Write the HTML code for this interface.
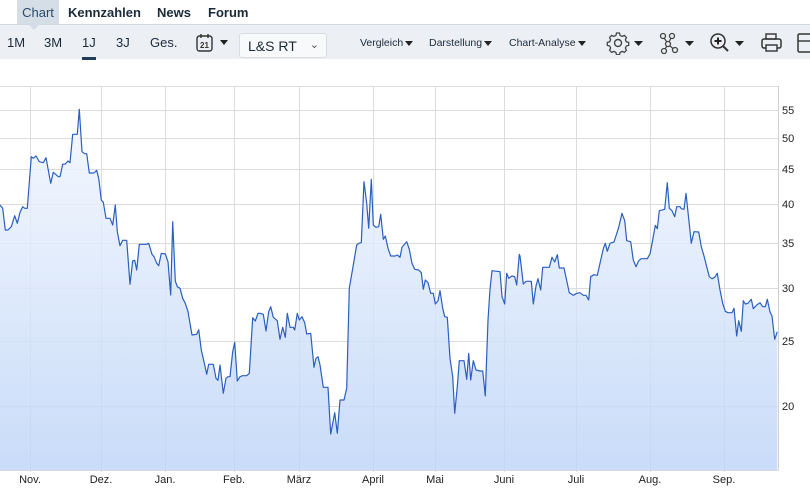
<!DOCTYPE html>
<html><head><meta charset="utf-8"><style>
*{margin:0;padding:0;box-sizing:border-box}
body{width:810px;height:494px;overflow:hidden;background:#fff;font-family:"Liberation Sans",sans-serif;color:#1b2a3a;position:relative}
.tabs{position:absolute;top:0;left:0;width:810px;height:24px}
.tab{position:absolute;top:0;height:24px;line-height:25px;font-size:13px;font-weight:bold}
.tb{position:absolute;top:24px;left:0;width:810px;height:35px;background:#eceff3;border-top:1px solid #cfd8df}
.t{position:absolute;top:10px;font-size:13px}
.s{position:absolute;top:12px;font-size:10.5px}
.tri{display:inline-block;width:0;height:0;border-left:4.5px solid transparent;border-right:4.5px solid transparent;border-top:5px solid #222;vertical-align:middle;margin-left:2px}
</style></head><body>
<div class="tabs">
<div class="tab" style="left:17px;width:42px;background:#d5dee6;text-align:center;color:#2b4a66;font-weight:normal">Chart</div>
<div class="tab" style="left:68px">Kennzahlen</div>
<div class="tab" style="left:157px">News</div>
<div class="tab" style="left:208px">Forum</div>
</div>
<div class="tb">
<div style="position:absolute;left:28px;top:-1px;width:0;height:0;border-left:6px solid transparent;border-right:6px solid transparent;border-top:6px solid #d5dee6"></div>
<div class="t" style="left:7px">1M</div>
<div class="t" style="left:44px">3M</div>
<div class="t" style="left:82px">1J</div>
<div style="position:absolute;left:82px;top:32px;width:14px;height:3px;background:#1d3c5a"></div>
<div class="t" style="left:116px">3J</div>
<div class="t" style="left:150px">Ges.</div>
<svg style="position:absolute;left:195px;top:8px" width="20" height="20" viewBox="0 0 20 20"><rect x="2" y="3" width="15" height="15" rx="2.5" fill="none" stroke="#333" stroke-width="1.4"/><line x1="6" y1="1" x2="6" y2="5" stroke="#333" stroke-width="1.4"/><line x1="13" y1="1" x2="13" y2="5" stroke="#333" stroke-width="1.4"/><text x="9.5" y="15" font-size="8" font-weight="bold" text-anchor="middle" font-family="Liberation Sans" fill="#333">21</text></svg>
<span class="tri" style="position:absolute;left:218px;top:15px"></span>
<div style="position:absolute;left:239px;top:8px;width:88px;height:25px;background:#f8f9fa;border:1px solid #d8dde2;border-radius:3px;font-size:14px;padding-left:8px;line-height:25px">L&amp;S RT<span style="position:absolute;right:7px;top:-1px;font-size:11px;color:#555">&#8964;</span></div>
<div class="s" style="left:360px">Vergleich<span class="tri"></span></div>
<div class="s" style="left:429px">Darstellung<span class="tri"></span></div>
<div class="s" style="left:509px">Chart-Analyse<span class="tri"></span></div>
<svg style="position:absolute;left:606px;top:6px" width="40" height="24" viewBox="0 0 40 24"><circle cx="12" cy="12" r="3.5" fill="none" stroke="#444" stroke-width="1.4"/><path d="M10.5 3.5h3l.6 2.4 2 1 2.3-1 2 2.1-1 2.3.9 2 2.4.6v3l-2.4.6-.9 2 1 2.3-2 2.1-2.3-1-2 1-.6 2.4h-3l-.6-2.4-2-1-2.3 1-2-2.1 1-2.3-.9-2-2.4-.6v-3l2.4-.6.9-2-1-2.3 2-2.1 2.3 1 2-1z" fill="none" stroke="#444" stroke-width="1.3" transform="translate(0,-1.5)"/><path d="M28 10h9l-4.5 5z" fill="#222"/></svg>
<svg style="position:absolute;left:658px;top:6px" width="40" height="24" viewBox="0 0 40 24"><circle cx="5" cy="5" r="2.5" fill="none" stroke="#444" stroke-width="1.3"/><circle cx="14" cy="5" r="2.5" fill="none" stroke="#444" stroke-width="1.3"/><circle cx="10" cy="13" r="2.5" fill="none" stroke="#444" stroke-width="1.3"/><circle cx="17" cy="19" r="2.5" fill="none" stroke="#444" stroke-width="1.3"/><circle cx="6" cy="20" r="2.5" fill="none" stroke="#444" stroke-width="1.3"/><path d="M6 7l3 4M13 7l-2 4M12 15l3 2.5M9 15l-2 3" stroke="#444" stroke-width="1.2"/><path d="M27 10h9l-4.5 5z" fill="#222"/></svg>
<svg style="position:absolute;left:708px;top:6px" width="40" height="24" viewBox="0 0 40 24"><circle cx="10" cy="10" r="7" fill="none" stroke="#333" stroke-width="1.5"/><path d="M15 15l5 5" stroke="#333" stroke-width="2"/><path d="M10 6.5v7M6.5 10h7" stroke="#222" stroke-width="2"/><path d="M27 10h9l-4.5 5z" fill="#222"/></svg>
<svg style="position:absolute;left:760px;top:7px" width="24" height="22" viewBox="0 0 24 22"><rect x="6" y="2" width="10" height="5" fill="none" stroke="#333" stroke-width="1.4"/><rect x="2" y="7" width="19" height="9" rx="2" fill="none" stroke="#333" stroke-width="1.5"/><rect x="6" y="13" width="11" height="6" fill="#eceff3" stroke="#333" stroke-width="1.4"/></svg>
<svg style="position:absolute;left:796px;top:7px" width="14" height="22" viewBox="0 0 14 22"><rect x="2" y="2" width="16" height="18" rx="1.5" fill="none" stroke="#333" stroke-width="1.5"/><path d="M2 9h16" stroke="#333" stroke-width="1.4"/></svg>
</div>
<svg style="position:absolute;left:0;top:0" width="810" height="494">
<defs><linearGradient id="g" x1="0" y1="0" x2="0" y2="1"><stop offset="0" stop-color="#f3f7fe"/><stop offset="1" stop-color="#bdd4f7"/></linearGradient></defs>
<g stroke="#dcdcdc" stroke-width="1">
<line x1="0" y1="86.5" x2="778" y2="86.5"/>
<line x1="0" y1="110.5" x2="778" y2="110.5"/><line x1="0" y1="138.5" x2="778" y2="138.5"/><line x1="0" y1="169.5" x2="778" y2="169.5"/><line x1="0" y1="204.5" x2="778" y2="204.5"/><line x1="0" y1="243.5" x2="778" y2="243.5"/><line x1="0" y1="288.5" x2="778" y2="288.5"/><line x1="0" y1="341.5" x2="778" y2="341.5"/><line x1="0" y1="406.5" x2="778" y2="406.5"/>
<line x1="30.5" y1="86" x2="30.5" y2="472"/><line x1="101.5" y1="86" x2="101.5" y2="472"/><line x1="165.5" y1="86" x2="165.5" y2="472"/><line x1="234.5" y1="86" x2="234.5" y2="472"/><line x1="299.5" y1="86" x2="299.5" y2="472"/><line x1="373.5" y1="86" x2="373.5" y2="472"/><line x1="435.5" y1="86" x2="435.5" y2="472"/><line x1="504.5" y1="86" x2="504.5" y2="472"/><line x1="576.5" y1="86" x2="576.5" y2="472"/><line x1="650.5" y1="86" x2="650.5" y2="472"/><line x1="724.5" y1="86" x2="724.5" y2="472"/>
</g>
<polygon fill="url(#g)" opacity="0.82" points="0,470 0,205 2.7,208.3 5.3,230 8,230 11.3,226.7 14.7,215.7 17.3,223.3 20,212.3 22.7,206.7 24.7,208.3 27.3,208.3 31.3,156.7 33.3,158.3 36,156 39.3,161.7 43.3,162.7 46,157.7 50.7,183.3 53.3,172.3 58.3,176.7 60,176.7 62.7,164.3 65.3,164 68,161 70,162.7 72.7,134.3 77.3,134.3 79.3,109.3 82,151.7 84.7,153.7 86.7,153.7 89.3,173 94,173 96.7,170.3 98.7,178.3 101.3,200 103.3,202.3 106,218.3 110,218.3 112.7,225 115.3,205 117.3,231.7 120,245.7 122.7,240.3 126.7,240.3 130,284.3 132.7,261 134.7,260.3 136.7,270 139.3,244.3 146.7,244.3 148.7,243.3 152,254.3 154,256.7 156.7,263.3 158.7,265.7 161.3,253.3 165.3,254 168,261.7 170.7,295 172.7,221.7 175.3,281 177.3,286.7 180,288.3 182.7,298.3 185.3,303.3 188,311.7 192,335 196.7,334.3 198.7,329.7 201.3,350 204,361.7 206.7,374.3 208.7,364.3 213.3,364.3 216,378.3 218,380.3 220,365 223.3,393.3 226,378.3 228,376.7 230,376.7 232.7,351.7 234.7,342.3 237.3,381 240,376.7 242.7,375.7 246.7,375.7 249.3,373.3 252.7,317.7 255.3,321 258,313.3 260,313.3 263.3,314.3 266,331 268.7,311.7 270.7,306.7 273.3,317.3 277.3,320.7 280,339.3 282.7,327.3 285.3,337.3 287.3,313.3 290,327.3 293.3,327.3 294.7,330 297.3,313.3 299.3,320 302,316.7 304.7,322.7 306.7,334 310.7,333.3 314,367.3 316,358.3 318,356.7 320,365 323.3,387.3 328,387.3 330.7,434 334.7,412.7 337.3,433.3 340,400 344,400 346.7,388.3 349.3,288.3 353.3,265 356.7,245 358.7,243.3 361.3,242.7 364,181.7 366.7,203.3 368.7,228.3 371.3,179.3 373.3,225 376,227.3 378.7,226.7 380.7,214.3 383.3,239.3 385.3,236 388,248.3 390.7,256 395.3,256 397.3,255 400,257.3 402,247.3 406.7,241.7 409.3,249.3 412,263.3 414.7,269.3 418.7,270 421.3,272.7 423.3,289.3 425.3,280 428,282.7 430.7,293.3 433.3,293.3 435.3,304 438,300.7 440,290.7 442.7,308.3 444.7,316.7 447.3,317.3 450,358.3 452.7,376.7 454.7,413.3 457.3,386.7 459.3,360.7 464,360.7 466.7,379.3 468.7,353.3 470.7,380 473.3,360.7 476,370 480,371 482.7,371 485.3,396 488,320 490,289.3 492,270.7 500,271.7 502,296.7 504.7,304 506.7,273.3 508.7,278.3 512,276 514.7,276.7 516.7,285 519.3,254.3 520,256 523.3,284 526,281.3 531.3,281.3 533.3,304 536,286 538,278.7 540.7,290 542.7,267.3 549.3,267.3 552,257.3 554.7,262 557.3,254.7 559.3,268 564,268 569.3,292.7 573.3,295.3 576.7,293.3 580,292.7 583.3,295.3 586,295.3 588.7,300 590.7,276.7 594,274.7 597.3,275.3 600,263.3 603.3,248.7 605.3,243.3 607.3,251.3 610,243.3 614,242 618.7,227.3 622,213.3 624.7,220.7 626.7,240.7 630.7,241.7 633.3,260 636,266.7 638.7,260.7 641.3,258.7 647.3,258.7 650,254 652.7,240 655.3,225.3 657.3,228.7 659.3,210.7 664.7,209.3 667.3,182.7 669.3,208.3 672,210.7 674.7,216.7 676.7,206.7 680,206.7 681.3,208.7 684,209.3 686,193.3 691.3,243.3 694,231.7 698.7,232 701.3,246.7 704,256 706.7,266.7 709.3,276.7 712,278.7 714.7,277.3 717.3,273.3 720,290 722.7,303.3 725.3,311.3 728,312.7 732,312.7 734,308.3 736.7,336 738.7,320.7 741.3,331.3 743.3,300.7 745.3,304 748,303.3 751.3,299.3 753.3,308.7 756.7,305 760,302.7 762.7,306.7 765.3,306.7 767.3,299.3 770,312 772,316 774.7,339.3 777.3,331.7 777.3,470"/>
<polyline fill="none" stroke="#2a5fbf" stroke-width="1.2" stroke-linejoin="round" points="0,205 2.7,208.3 5.3,230 8,230 11.3,226.7 14.7,215.7 17.3,223.3 20,212.3 22.7,206.7 24.7,208.3 27.3,208.3 31.3,156.7 33.3,158.3 36,156 39.3,161.7 43.3,162.7 46,157.7 50.7,183.3 53.3,172.3 58.3,176.7 60,176.7 62.7,164.3 65.3,164 68,161 70,162.7 72.7,134.3 77.3,134.3 79.3,109.3 82,151.7 84.7,153.7 86.7,153.7 89.3,173 94,173 96.7,170.3 98.7,178.3 101.3,200 103.3,202.3 106,218.3 110,218.3 112.7,225 115.3,205 117.3,231.7 120,245.7 122.7,240.3 126.7,240.3 130,284.3 132.7,261 134.7,260.3 136.7,270 139.3,244.3 146.7,244.3 148.7,243.3 152,254.3 154,256.7 156.7,263.3 158.7,265.7 161.3,253.3 165.3,254 168,261.7 170.7,295 172.7,221.7 175.3,281 177.3,286.7 180,288.3 182.7,298.3 185.3,303.3 188,311.7 192,335 196.7,334.3 198.7,329.7 201.3,350 204,361.7 206.7,374.3 208.7,364.3 213.3,364.3 216,378.3 218,380.3 220,365 223.3,393.3 226,378.3 228,376.7 230,376.7 232.7,351.7 234.7,342.3 237.3,381 240,376.7 242.7,375.7 246.7,375.7 249.3,373.3 252.7,317.7 255.3,321 258,313.3 260,313.3 263.3,314.3 266,331 268.7,311.7 270.7,306.7 273.3,317.3 277.3,320.7 280,339.3 282.7,327.3 285.3,337.3 287.3,313.3 290,327.3 293.3,327.3 294.7,330 297.3,313.3 299.3,320 302,316.7 304.7,322.7 306.7,334 310.7,333.3 314,367.3 316,358.3 318,356.7 320,365 323.3,387.3 328,387.3 330.7,434 334.7,412.7 337.3,433.3 340,400 344,400 346.7,388.3 349.3,288.3 353.3,265 356.7,245 358.7,243.3 361.3,242.7 364,181.7 366.7,203.3 368.7,228.3 371.3,179.3 373.3,225 376,227.3 378.7,226.7 380.7,214.3 383.3,239.3 385.3,236 388,248.3 390.7,256 395.3,256 397.3,255 400,257.3 402,247.3 406.7,241.7 409.3,249.3 412,263.3 414.7,269.3 418.7,270 421.3,272.7 423.3,289.3 425.3,280 428,282.7 430.7,293.3 433.3,293.3 435.3,304 438,300.7 440,290.7 442.7,308.3 444.7,316.7 447.3,317.3 450,358.3 452.7,376.7 454.7,413.3 457.3,386.7 459.3,360.7 464,360.7 466.7,379.3 468.7,353.3 470.7,380 473.3,360.7 476,370 480,371 482.7,371 485.3,396 488,320 490,289.3 492,270.7 500,271.7 502,296.7 504.7,304 506.7,273.3 508.7,278.3 512,276 514.7,276.7 516.7,285 519.3,254.3 520,256 523.3,284 526,281.3 531.3,281.3 533.3,304 536,286 538,278.7 540.7,290 542.7,267.3 549.3,267.3 552,257.3 554.7,262 557.3,254.7 559.3,268 564,268 569.3,292.7 573.3,295.3 576.7,293.3 580,292.7 583.3,295.3 586,295.3 588.7,300 590.7,276.7 594,274.7 597.3,275.3 600,263.3 603.3,248.7 605.3,243.3 607.3,251.3 610,243.3 614,242 618.7,227.3 622,213.3 624.7,220.7 626.7,240.7 630.7,241.7 633.3,260 636,266.7 638.7,260.7 641.3,258.7 647.3,258.7 650,254 652.7,240 655.3,225.3 657.3,228.7 659.3,210.7 664.7,209.3 667.3,182.7 669.3,208.3 672,210.7 674.7,216.7 676.7,206.7 680,206.7 681.3,208.7 684,209.3 686,193.3 691.3,243.3 694,231.7 698.7,232 701.3,246.7 704,256 706.7,266.7 709.3,276.7 712,278.7 714.7,277.3 717.3,273.3 720,290 722.7,303.3 725.3,311.3 728,312.7 732,312.7 734,308.3 736.7,336 738.7,320.7 741.3,331.3 743.3,300.7 745.3,304 748,303.3 751.3,299.3 753.3,308.7 756.7,305 760,302.7 762.7,306.7 765.3,306.7 767.3,299.3 770,312 772,316 774.7,339.3 777.3,331.7"/>
<line x1="778.5" y1="86" x2="778.5" y2="471" stroke="#d0d0d0"/>
<line x1="0" y1="470.5" x2="779" y2="470.5" stroke="#d8d8d8"/>
<g font-family="Liberation Sans" font-size="11" fill="#222">
<text x="782" y="114">55</text><text x="782" y="142">50</text><text x="782" y="173">45</text><text x="782" y="208">40</text><text x="782" y="247">35</text><text x="782" y="292">30</text><text x="782" y="345">25</text><text x="782" y="410">20</text>
<g text-anchor="middle"><text x="30" y="483">Nov.</text><text x="101" y="483">Dez.</text><text x="165" y="483">Jan.</text><text x="234" y="483">Feb.</text><text x="299" y="483">März</text><text x="373" y="483">April</text><text x="435" y="483">Mai</text><text x="504" y="483">Juni</text><text x="576" y="483">Juli</text><text x="650" y="483">Aug.</text><text x="724" y="483">Sep.</text></g>
</g>
</svg>
</body></html>
